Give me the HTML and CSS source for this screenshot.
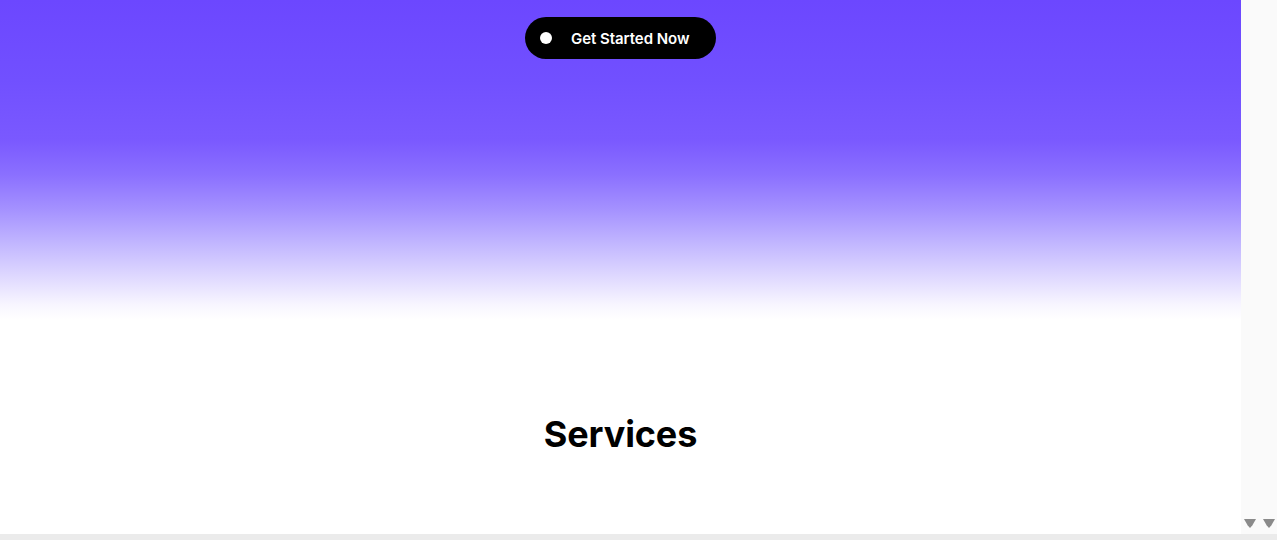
FILE: index.html
```html
<!DOCTYPE html>
<html lang="en">
<head>
<meta charset="utf-8">
<title>Get Started</title>
<link rel="stylesheet" href="styles.css">
</head>
<body>
<div class="frame">
  <div class="viewport">
    <main class="page">
      <section class="hero">
        <a class="cta" href="#"><span class="cta-dot"></span><span class="cta-label">Get Started Now</span></a>
      </section>
      <section class="services">
        <h2 class="services-title">Services</h2>
      </section>
    </main>
    <aside class="vscroll">
      <div class="arrows"><span class="arrow"></span><span class="arrow"></span></div>
    </aside>
  </div>
  <div class="hscroll"></div>
</div>
</body>
</html>
```
FILE: styles.css
```css
* { box-sizing: border-box; }
html, body { margin: 0; padding: 0; }
body {
  font-family: Inter, "Noto Sans", "Liberation Sans", sans-serif;
  background: #ffffff;
  overflow: hidden;
}
.frame {
  width: 1277px;
  height: 540px;
  display: flex;
  flex-direction: column;
}
.viewport {
  height: 534px;
  display: flex;
}
.page {
  width: 1241px;
  height: 534px;
  overflow: hidden;
  background: #ffffff;
}
.hero {
  height: 320px;
  display: flex;
  justify-content: center;
  align-items: flex-start;
  padding-top: 17px;
  background: linear-gradient(to bottom,
    #6c47ff 0px,
    #7150ff 80px,
    #7a59ff 140px,
    #8b70ff 175px,
    #a592ff 210px,
    #c3b8ff 245px,
    #e2dcff 280px,
    #f8f6ff 305px,
    #ffffff 320px);
}
.cta {
  display: flex;
  align-items: center;
  width: 191px;
  height: 42px;
  border-radius: 21px;
  background: #000000;
  color: #ffffff;
  text-decoration: none;
  padding-left: 15px;
}
.cta-dot {
  width: 12px;
  height: 12px;
  border-radius: 50%;
  background: #ffffff;
  margin-right: 19px;
}
.cta-label {
  font-size: 15px;
  font-weight: 600;
  letter-spacing: -0.05px;
}
.services {
  display: flex;
  justify-content: center;
  padding-top: 89px;
}
.services-title {
  margin: 0;
  font-size: 36px;
  font-weight: 700;
  color: #000000;
  letter-spacing: -0.1px;
  line-height: 50px;
}
.vscroll {
  width: 36px;
  height: 534px;
  background: #fafafa;
  display: flex;
  align-items: flex-end;
  padding-bottom: 6px;
}
.arrows {
  display: flex;
  gap: 7px;
  padding-left: 3px;
}
.arrow {
  width: 12px;
  height: 9px;
  background: #8a8a8a;
  clip-path: polygon(0 0, 100% 0, 70% 70%, 50% 100%, 30% 70%);
}
.hscroll {
  height: 6px;
  background: #ebebeb;
}
```
